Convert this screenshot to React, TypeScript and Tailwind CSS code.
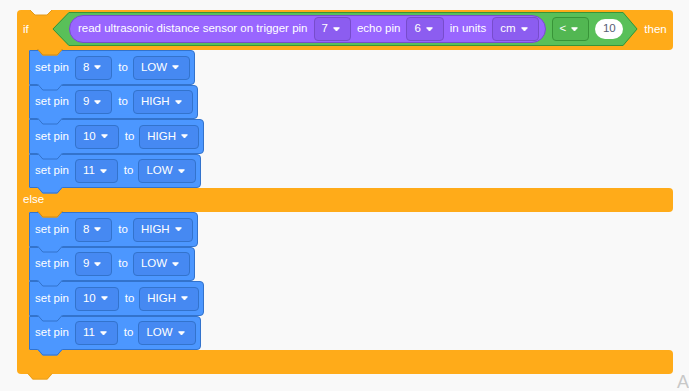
const tones = {
  blue: "bg-[#4689f2] border-[#3373cc]",
  purple: "bg-[#8c5df0] border-[#774dcb]",
  green: "bg-[#52b752] border-[#389438]",
};

function Arrow() {
  return (
    <svg width="7" height="5" viewBox="0 0 7 5" className="shrink-0">
      <path d="M0.6 0.8 H6.4 L3.5 4 Z" fill="white" stroke="white" strokeWidth="1" strokeLinejoin="round" />
    </svg>
  );
}

function Drop({ label, tone }: { label: string; tone: keyof typeof tones }) {
  return (
    <div className={`flex h-[24px] shrink-0 items-center gap-[5px] rounded-[4px] border pl-[7px] pr-[10px] ${tones[tone]}`}>
      <span>{label}</span>
      <Arrow />
    </div>
  );
}

// the little connector that hangs under a block
function Tab({ fill, stroke, className }: { fill: string; stroke: string; className: string }) {
  return (
    <svg width="26" height="7" viewBox="0 0 26 7" className={`absolute z-10 ${className}`}>
      <path d="M0 0 L5.5 6.5 H20.5 L26 0 Z" fill={fill} />
      <path d="M0.5 0 L5.8 6 H20.2 L25.5 0" fill="none" stroke={stroke} strokeWidth="1" />
    </svg>
  );
}

function SetPin({ pin, value, tall }: { pin: string; value: string; tall: boolean }) {
  return (
    <div
      className={`relative flex items-center gap-[6px] rounded-r-[4px] border border-[#3373cc] bg-[#4c97ff] pl-[5px] pr-[4px] ${
        tall ? "h-[35px]" : "h-[34px]"
      }`}
    >
      <span>set pin</span>
      <Drop label={pin} tone="blue" />
      <span>to</span>
      <div className="-ml-[1px]">
        <Drop label={value} tone="blue" />
      </div>
      <Tab fill="#4c97ff" stroke="#3373cc" className="left-[7px] -bottom-[7px]" />
    </div>
  );
}

function Condition() {
  return (
    <div className="-mt-[2px] flex h-[34px] shrink-0">
      <svg width="17" height="34" viewBox="0 0 17 34">
        <path d="M17 0 L0.5 17 L17 34 Z" fill="#59c059" />
        <path d="M17 0.5 L1 17 L17 33.5" fill="none" stroke="#389438" strokeWidth="1" />
      </svg>
      <div className="flex h-[34px] items-center border-y border-[#389438] bg-[#59c059]">
        <div className="flex h-[28px] items-center gap-[6px] rounded-full border border-[#774dcb] bg-[#9966ff] pl-[8px] pr-[6px]">
          <span className="whitespace-nowrap">read ultrasonic distance sensor on trigger pin</span>
          <Drop label="7" tone="purple" />
          <span className="whitespace-nowrap">echo pin</span>
          <Drop label="6" tone="purple" />
          <span className="whitespace-nowrap">in units</span>
          <Drop label="cm" tone="purple" />
        </div>
        <div className="ml-[6px]">
          <Drop label="<" tone="green" />
        </div>
        <div className="ml-[6px] flex h-[20px] w-[28px] items-center justify-center rounded-full bg-white text-[#575e75]">
          10
        </div>
      </div>
      <svg width="15" height="34" viewBox="0 0 15 34">
        <path d="M0 0 L14.5 17 L0 34 Z" fill="#59c059" />
        <path d="M0 0.5 L14 17 L0 33.5" fill="none" stroke="#389438" strokeWidth="1" />
      </svg>
    </div>
  );
}

const thenPins = [
  { pin: "8", value: "LOW" },
  { pin: "9", value: "HIGH" },
  { pin: "10", value: "HIGH" },
  { pin: "11", value: "LOW" },
];

const elsePins = [
  { pin: "8", value: "HIGH" },
  { pin: "9", value: "LOW" },
  { pin: "10", value: "HIGH" },
  { pin: "11", value: "LOW" },
];

function Mouth({ pins }: { pins: { pin: string; value: string }[] }) {
  return (
    <div className="flex">
      <div className="w-[12px] shrink-0 bg-[#ffab19]" />
      <div className="flex flex-col items-start">
        {pins.map((p, i) => (
          <SetPin key={i} pin={p.pin} value={p.value} tall={i % 2 === 0} />
        ))}
      </div>
    </div>
  );
}

export default function App() {
  return (
    <div className="relative h-[391px] w-full overflow-hidden bg-[#f9f9f9] pl-[17px] pt-[10px] font-['Liberation_Sans',Arial,sans-serif] text-[11.5px] leading-none text-white">
      <div className="flex w-[656px] flex-col">
        <div className="relative flex h-[40px] items-center rounded-t-[4px] rounded-br-[4px] bg-[#ffab19]">
          <svg width="22" height="6" viewBox="0 0 22 6" className="absolute left-[13px] top-0">
            <path d="M0 0 L5 5 H17 L22 0 Z" fill="#f9f9f9" />
            <path d="M0 0 L5 5 H17 L22 0" fill="none" stroke="#e39a1a" strokeWidth="1" />
          </svg>
          <span className="w-[35px] shrink-0 pl-[6px]">if</span>
          <Condition />
          <span className="ml-[6px]">then</span>
          <Tab fill="#ffab19" stroke="#cf8b17" className="left-[20px] -bottom-[6px]" />
        </div>
        <Mouth pins={thenPins} />
        <div className="relative flex h-[24px] items-center rounded-r-[4px] bg-[#ffab19] pl-[6px]">
          else
          <Tab fill="#ffab19" stroke="#cf8b17" className="left-[20px] -bottom-[6px]" />
        </div>
        <Mouth pins={elsePins} />
        <div className="relative h-[24px] rounded-b-[4px] rounded-tr-[4px] bg-[#ffab19]">
          <Tab fill="#ffab19" stroke="#e9a020" className="left-[10px] -bottom-[6px]" />
        </div>
      </div>
      <span className="absolute left-[677px] top-[373px] text-[18px] text-[#c8c8c8]">A</span>
    </div>
  );
}
